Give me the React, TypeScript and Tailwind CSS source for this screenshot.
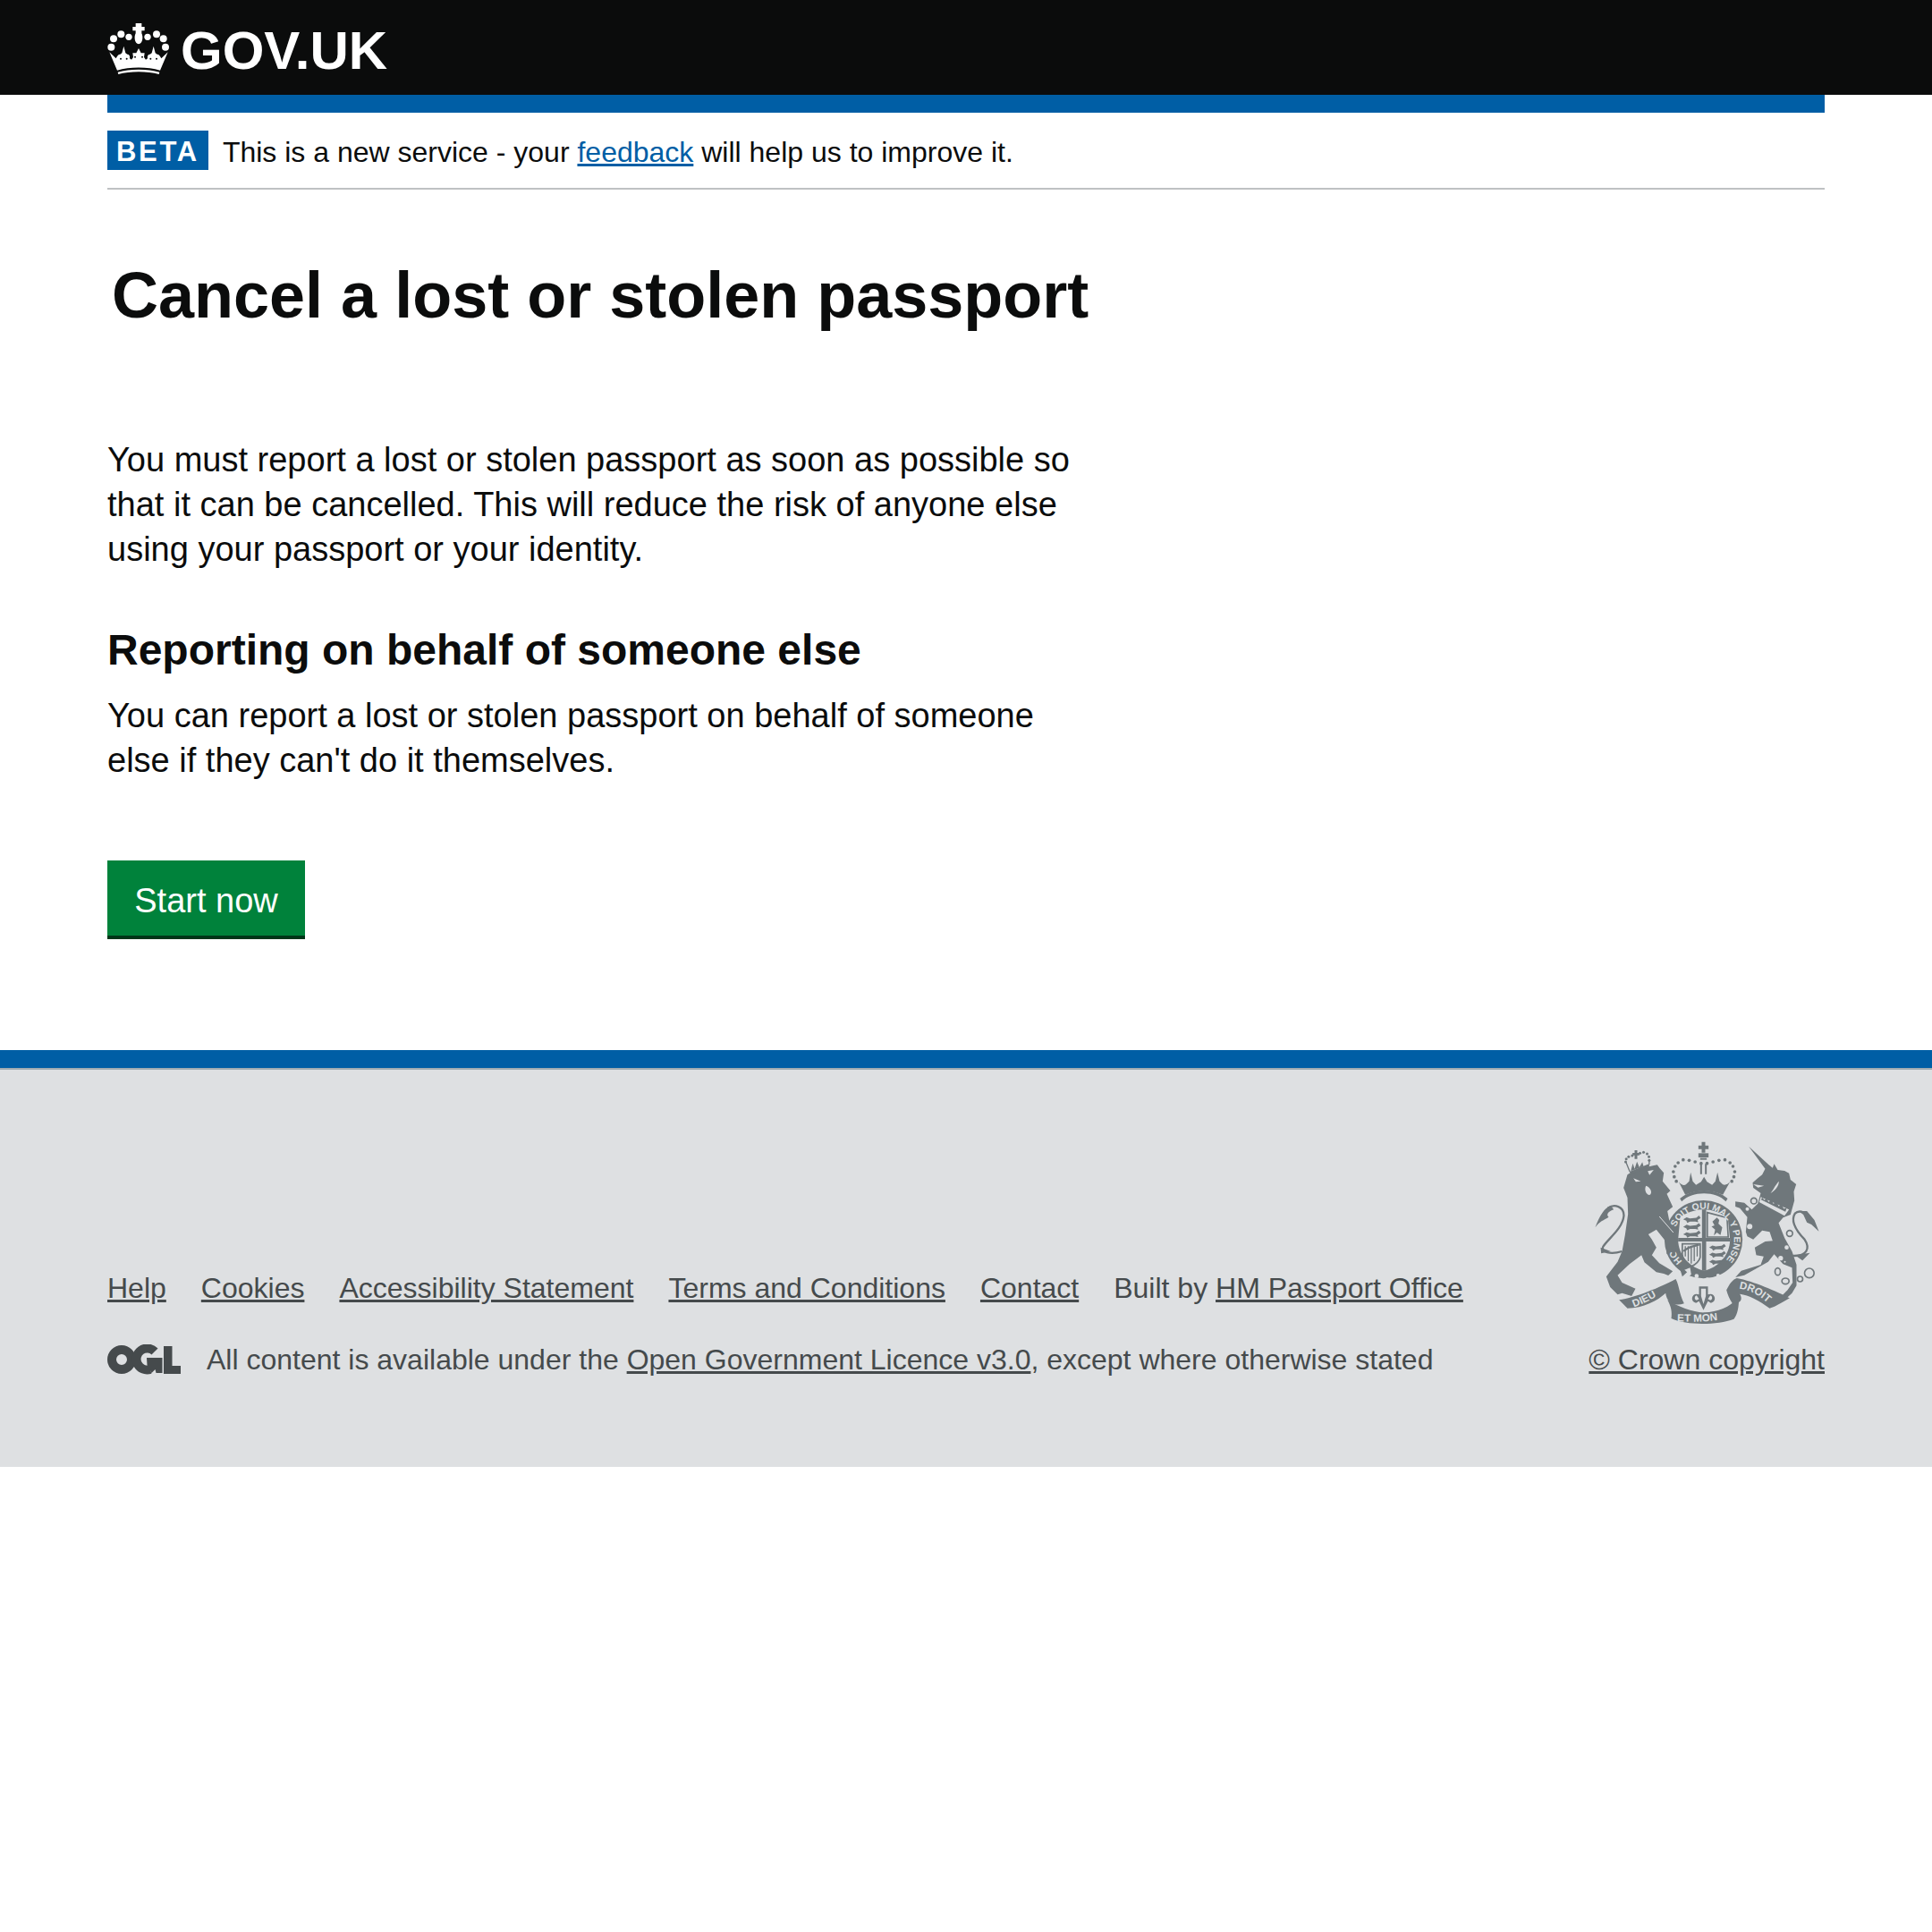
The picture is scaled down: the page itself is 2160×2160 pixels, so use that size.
import React from "react";

function Crown({ cls = "w-[80px] h-[70px] shrink-0" }: { cls?: string }) {
  const dots: [number, number, number][] = [[87, 64, 11], [150, 64, 11], [61, 55, 12], [180, 55, 12], [36, 70, 12], [203, 70, 12], [28, 98, 12], [210, 98, 12]];
  const slits: [number, number][] = [[60, 137], [80, 137], [160, 137], [180, 137], [108, 131], [132, 131]];
  return (
    <svg viewBox="0 0 240 210" className={cls} fill="#fff">
      <path d="M110 18H130V30H140V43H130V52C136 62 134 88 120 88C106 88 104 62 110 52V43H100V30H110Z" />
      {dots.map(([x, y, r]) => <circle key={x} cx={x} cy={y} r={r} />)}
      <path d="M22 115L44 136C48 128 52 122 58 122L64 118L70 95L76 118L82 122C88 122 92 128 90 136L96 140L102 132L100 118L112 118L120 102L128 118L140 118L138 132L144 140L150 136C148 128 152 122 158 122L164 118L170 95L176 118L182 122C188 122 192 128 196 136L218 115L192 176C150 163 90 163 48 176Z" />
      {slits.map(([x, y]) => <circle key={x} cx={x} cy={y} r="3" fill="#0b0c0c" />)}
      <path d="M50 182C90 170 150 170 190 182L188 189C150 178 90 178 52 189Z" />
    </svg>
  );
}

function Ogl({ cls = "w-[82px] h-[34px] shrink-0" }: { cls?: string }) {
  return (
    <svg viewBox="0 0 82 34" className={cls}>
      <circle cx="16" cy="17" r="11" fill="none" stroke="#454a4c" strokeWidth="10" />
      <path d="M53 8A12 12 0 1 0 48 28" fill="none" stroke="#454a4c" strokeWidth="10" />
      <path d="M44 15h17.500v17h-7l-1-4-4 4-5-9z" fill="#454a4c" />
      <path d="M63 2h9.500v22h9.500v9H63z" fill="#454a4c" />
    </svg>
  );
}

const c = "#6f777b";
const bg = "#dee0e2";
const SANS = "'Liberation Sans', Arial, sans-serif";
const passant = "M0 0L10-6L20-3L38-5L46-11L51-4L42 2L44 8L35 6L20 6L12 10L9 4Z";

function Arms({ cls = "w-[257px] h-[210px] mr-[3px]" }: { cls?: string }) {
  const crownDots: [number, number][] = [[125, 90], [105, 85], [85, 80], [65, 78], [48, 88], [38, 100], [32, 118], [35, 135], [42, 150], [145, 90], [165, 85], [185, 80], [205, 78], [222, 88], [232, 100], [238, 118], [235, 135], [228, 150]];
  const lionCrownDots: [number, number][] = [[112, 85], [114, 75], [122, 68], [134, 64], [160, 56], [172, 53], [184, 58], [190, 68], [191, 80]];
  const tl: [number, number][] = [[65, 278], [65, 303], [65, 328]];
  const br: [number, number][] = [[152, 372], [152, 396], [152, 420]];
  return (
    <svg viewBox="60 40 770 630" className={cls} fill={c}>
      <defs>
        <path id="garterTop" d="M40 304A102 102 0 1 1 191 429" />
        <path id="garterLeft" d="M62 418A102 102 0 0 1 33 366" />
        <path id="ribLeft" d="M200 602C240 587 280 567 318 537" />
        <path id="ribMid" d="M345 650C400 652 470 652 525 637" />
        <path id="ribRight" d="M552 540C590 545 630 565 662 604" />
      </defs>
      {/* centre: garter, shield, crown */}
      <g transform="translate(300 30)">
        <circle cx="133" cy="345" r="131" />
        <path d="M55 270C85 250 115 245 133 245C160 245 195 255 215 275L222 345C222 400 180 440 135 450C90 440 48 400 48 345Z" fill={bg} />
        <path d="M128 245H142V450H128ZM48 340H222V352H48Z" />
        <path d="M146 255L212 272L216 337H146Z" fill="none" stroke={c} strokeWidth="5" />
        {tl.map(([x, y]) => <path key={y} d={passant} transform={`translate(${x} ${y}) scale(1.15)`} />)}
        {br.map(([x, y]) => <path key={y} d={passant} transform={`translate(${x} ${y}) scale(1.1)`} />)}
        <path d="M163 285L178 272L186 280L183 292L196 305L190 330L178 322L168 332L172 312L160 302L170 298Z" />
        <path d="M62 360H122V405C118 420 100 432 92 436C80 430 62 415 62 395Z" fill="none" stroke={c} strokeWidth="5" />
        <path d="M72 368V402M82 368V418M92 368V426M102 368V418M112 368V402" stroke={c} strokeWidth="4" fill="none" />
        <path d="M66 385C85 365 100 370 118 362" stroke={c} strokeWidth="7" fill="none" />
        <text fill={bg} fontFamily={SANS} fontSize="31" fontWeight="700">
          <textPath href="#garterTop">SOIT QUI MAL Y PENSE</textPath>
          <textPath href="#garterLeft">HON</textPath>
        </text>
        <circle cx="110" cy="468" r="7" fill={bg} /><circle cx="146" cy="480" r="7" fill={bg} /><circle cx="182" cy="466" r="6" fill={bg} />
        <path d="M62 450L88 440L92 462L72 480Z" fill={bg} />
        <path d="M50 430L62 470L78 455Z" />
        {/* crown */}
        <path d="M127 18H139V30H150V42H139V54H127V42H116V30H127Z" />
        <path d="M116 56H150V70H116Z" />
        <path d="M122 72H144V78H122Z" />
        <path d="M122 92H128V126H122ZM138 92H144V126H138Z" />
        {crownDots.map(([x, y]) => <circle key={`${x}-${y}`} cx={x} cy={y} r="5.500" />)}
        <path d="M50 152C60 165 70 165 75 160L85 150L90 120L97 150L108 162L125 152L135 135L145 152L162 162L173 150L180 120L187 150L197 160C205 165 215 160 222 152L198 195C160 178 110 178 72 195Z" />
        <path d="M60 218C95 182 175 182 208 218L214 208C175 172 95 172 54 208Z" />
        {/* fleur */}
        <path d="M118 503H148V530C170 520 182 552 158 558L148 552L140 568L133 582L126 568L118 552L108 558C84 552 96 520 118 530Z" />
        <path d="M125 510H141V535L133 562L125 535ZM110 533C102 535 102 548 110 549L118 545ZM156 533C164 535 164 548 156 549L148 545Z" fill={bg} />
      </g>
      {/* ribbons */}
      <path d="M150 578C205 570 290 535 340 508C352 530 352 560 368 590C340 600 310 590 306 555C280 580 230 605 178 606Z" />
      <path d="M312 578C345 600 405 622 436 620C480 618 520 605 552 568C552 600 548 625 535 642C480 662 380 665 325 640C328 620 325 600 312 578Z" />
      <path d="M510 545C520 525 530 510 545 505C600 515 680 550 722 572C690 590 670 603 655 606C620 580 585 562 555 558C565 575 560 590 530 590C520 575 514 560 510 545Z" />
      <g fill={bg} fontFamily={SANS} fontSize="35" fontWeight="700">
        <text><textPath href="#ribLeft">DIEU</textPath></text>
        <text><textPath href="#ribMid">ET MON</textPath></text>
        <text><textPath href="#ribRight">DROIT</textPath></text>
      </g>
      {/* lion */}
      <g transform="translate(60 30)">
        <path d="M118 128C140 112 190 100 218 95L226 106L240 122L236 150L262 182L250 192L270 236L252 250L262 300L275 330L281 365L277 398L262 385L250 395L245 350L215 312L188 328L200 345L215 372L200 398L225 425L270 452L255 466L240 460L215 455L175 422L165 398L125 428L85 465L100 490L145 510L132 535L100 525L85 530L60 505L47 470L85 420L100 385L110 330L120 260L118 205L105 172Z" />
        <path d="M225 268L272 322" stroke={bg} strokeWidth="3" fill="none" />
        <path d="M138 140L163 150L146 152ZM186 116L206 112L192 129ZM180 165C196 170 204 190 192 196C180 194 174 178 180 165Z" fill={bg} />
        <path d="M100 385C60 397 28 387 36 370C50 345 102 310 106 265C106 235 75 224 52 240" fill="none" stroke={c} strokeWidth="7" />
        <path d="M62 232C40 240 25 265 10 305C22 285 40 280 55 270C45 262 55 250 72 245ZM28 372L62 385L30 392Z" />
        <path d="M125 118L190 92L192 101L130 128Z" />
        <path d="M142 46H151V55H158V63H151V75H142V63H135V55H142ZM130 112L136 90L142 108L150 84L158 103L168 86L172 100L130 116Z" />
        <path d="M113 86L126 118M191 80V95" fill="none" stroke={c} strokeWidth="4" />
        {lionCrownDots.map(([x, y]) => <circle key={`${x}-${y}`} cx={x} cy={y} r="4.500" />)}
      </g>
      {/* unicorn */}
      <g transform="translate(540 30)">
        <path d="M45 33L112 95L125 105L130 92L142 112L165 115L180 123L185 145L204 160L196 185L198 215L185 262L160 272L145 290L165 340L190 385L205 430L205 500L190 525L172 542L155 535L175 515L192 490L190 440L160 428L130 395L110 420L30 465L0 472L20 450L85 430L95 402L70 398L65 372L100 352L125 350L115 320L90 315L60 345L40 335L35 320L40 270L15 240L0 235L0 218L30 222L55 245L75 225L85 190L60 172L58 155L75 140L90 128L100 108Z" />
        <path d="M85 203L180 245L165 266L80 220Z" fill={bg} />
        <path d="M90 204L97 213L104 207L112 220L120 212L128 226L136 218L146 234L154 226L162 242L172 240L168 252L86 212Z" />
        <path d="M60 160L96 165L76 171ZM146 150C146 165 135 180 118 190C128 178 132 165 146 150Z" fill={bg} />
        <circle cx="172" cy="372" r="7" fill={bg} /><circle cx="152" cy="408" r="8" fill={bg} /><circle cx="166" cy="420" r="3" fill={bg} />
        <circle cx="40" cy="243" r="6" fill={bg} /><circle cx="48" cy="302" r="9" fill={bg} />
        <g fill="none" stroke={c} strokeWidth="5">
          <circle cx="62" cy="216" r="10" /><circle cx="182" cy="325" r="10" /><ellipse cx="142" cy="453" rx="9" ry="12" /><ellipse cx="168" cy="485" rx="12" ry="10" /><circle cx="217" cy="478" r="9" /><circle cx="248" cy="458" r="16" />
        </g>
        <path d="M192 400C240 402 252 375 232 345C200 312 185 282 200 258C212 246 232 252 242 265" fill="none" stroke={c} strokeWidth="7" />
        <path d="M212 250L240 250L265 280L280 318L255 295L240 288L228 262ZM200 398L250 390L225 416Z" />
      </g>
    </svg>
  );
}

const footerLinks = ["Help", "Cookies", "Accessibility Statement", "Terms and Conditions", "Contact"];

export default function App() {
  return (
    <div className="bg-white text-[#0b0c0c] font-['Liberation_Sans',Arial,sans-serif]">
      <header className="bg-[#0b0c0c] h-[106px] px-[115px] flex items-start pt-[20px] gap-[7px]">
        <Crown />
        <span className="text-white font-bold text-[60px] leading-[64px] mt-[5px]">GOV.UK</span>
      </header>
      <div className="px-[120px]">
        <div className="h-5 bg-[#005ea5]" />
        <div className="flex items-start gap-4 py-5 border-b-2 border-[#bfc1c3]">
          <strong className="bg-[#005ea5] text-white font-bold text-[31px] leading-[48px] tracking-[2.700px] px-[10px] h-[44px]">BETA</strong>
          <p className="text-[32px] leading-[44px] pt-[2px] h-[44px]">
            This is a new service - your <a href="#" className="text-[#005ea5] underline">feedback</a> will help us to improve it.
          </p>
        </div>
        <h1 className="font-bold text-[72px] leading-[80px] pt-[78px] px-[5px]">Cancel a lost or stolen passport</h1>
        <div className="w-[1100px]">
          <p className="text-[38px] leading-[50px] mt-[119px]">
            You must report a lost or stolen passport as soon as possible so that it can be cancelled. This will reduce the risk of anyone else using your passport or your identity.
          </p>
          <h2 className="font-bold text-[48px] leading-[60px] mt-[58px]">Reporting on behalf of someone else</h2>
          <p className="text-[38px] leading-[50px] mt-[18px]">
            You can report a lost or stolen passport on behalf of someone else if they can't do it themselves.
          </p>
        </div>
        <button className="mt-[87px] block bg-[#00823b] text-white text-[38px] leading-[50px] h-[88px] w-[221px] pt-[5px] border-b-4 border-[#003618]">Start now</button>
      </div>
      <footer className="mt-[124px] bg-[#dee0e2] border-t-[20px] border-[#005ea5] text-[#454a4c] text-[32px] leading-[40px]">
        <div className="border-t-2 border-[#a1acb2] h-[446px] px-[120px] pt-[78px] flex justify-between">
          <div className="pt-[146px]">
            <div className="flex gap-[39px]">
              {footerLinks.map((l) => <a key={l} href="#" className="underline">{l}</a>)}
              <span>Built by <a href="#" className="underline">HM Passport Office</a></span>
            </div>
            <div className="flex items-center gap-[29px] mt-[40px]">
              <Ogl />
              <span>All content is available under the <a href="#" className="underline">Open Government Licence v3.0</a>, except where otherwise stated</span>
            </div>
          </div>
          <div className="flex flex-col items-end">
            <Arms />
            <a href="#" className="underline mt-[16px]">© Crown copyright</a>
          </div>
        </div>
      </footer>
    </div>
  );
}
